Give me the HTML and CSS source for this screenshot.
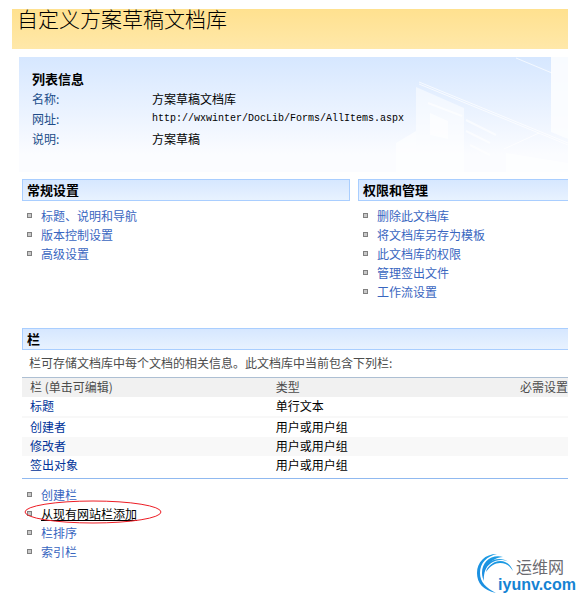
FILE: index.html
```html
<!DOCTYPE html>
<html lang="zh-CN">
<head>
  <meta charset="utf-8">
  <title>自定义方案草稿文档库</title>
  <link rel="stylesheet" href="styles.css">
</head>
<body>
  <h1 class="banner">自定义方案草稿文档库</h1>
  <div class="info">
    <svg class="info-art" viewBox="0 0 174 115" aria-hidden="true">
      <path fill="#fcfdff" fill-opacity=".9" d="M157 0h17v82l-17-7z"/>
      <path fill="#fff" fill-opacity=".5" d="M22 30l48 21v64H22z"/>
      <path fill="#fff" fill-opacity=".6" d="M36 56l18 8v18l-18-4zM2 86l20-12v41H2zM112 96l62 10v9h-62z"/>
      <path fill="none" stroke="#fff" stroke-opacity=".7" d="M25 25l149 61M25 27l149 61M122 1l36 15M110 92l35-16"/>
      <path fill="none" stroke="#fff" stroke-width="2" stroke-opacity=".6" d="M34 46l34 13M72 63l30 15M72 74l24 12M76 88l20 10"/>
    </svg>
    <h2>列表信息</h2>
    <dl>
      <dt>名称:</dt><dd>方案草稿文档库</dd>
      <dt>网址:</dt><dd class="url">http://wxwinter/DocLib/Forms/AllItems.aspx</dd>
      <dt>说明:</dt><dd>方案草稿</dd>
    </dl>
  </div>
  <div class="settings">
    <div class="group">
      <h2 class="bar">常规设置</h2>
      <ul class="links">
        <li><a href="#">标题、说明和导航</a></li>
        <li><a href="#">版本控制设置</a></li>
        <li><a href="#">高级设置</a></li>
      </ul>
    </div>
    <div class="group">
      <h2 class="bar cut">权限和管理</h2>
      <ul class="links">
        <li><a href="#">删除此文档库</a></li>
        <li><a href="#">将文档库另存为模板</a></li>
        <li><a href="#">此文档库的权限</a></li>
        <li><a href="#">管理签出文件</a></li>
        <li><a href="#">工作流设置</a></li>
      </ul>
    </div>
  </div>
  <div class="columns">
    <h2 class="bar cut">栏</h2>
    <p>栏可存储文档库中每个文档的相关信息。此文档库中当前包含下列栏:</p>
    <table>
      <thead>
        <tr><th class="name">栏 (单击可编辑)</th><th>类型</th><th class="required">必需设置</th></tr>
      </thead>
      <tbody>
        <tr class="first"><td><a href="#">标题</a></td><td>单行文本</td><td></td></tr>
        <tr><td><a href="#">创建者</a></td><td>用户或用户组</td><td></td></tr>
        <tr class="alt"><td><a href="#">修改者</a></td><td>用户或用户组</td><td></td></tr>
        <tr><td><a href="#">签出对象</a></td><td>用户或用户组</td><td></td></tr>
      </tbody>
    </table>
    <ul class="links">
      <li><a href="#">创建栏</a></li>
      <li class="marked">
        <a href="#">从现有网站栏添加</a>
        <svg class="ring" viewBox="0 0 138 24" aria-hidden="true"><ellipse cx="69" cy="12" rx="68" ry="11" fill="none" stroke="#ed1c24"/></svg>
      </li>
      <li><a href="#">栏排序</a></li>
      <li><a href="#">索引栏</a></li>
    </ul>
  </div>
  <div class="logo">
    <svg viewBox="0 0 38 42" aria-hidden="true">
      <defs>
        <linearGradient id="swirl" x1="0" y1="1" x2="1" y2="0">
          <stop offset="0" stop-color="#1b8be0"/>
          <stop offset="1" stop-color="#1c9fe4"/>
        </linearGradient>
      </defs>
      <g fill="url(#swirl)">
        <path d="M21 1C9 1 1 9 1 20c0 10 6 17 19 20C10 35 4 29 4 20 4 10 11 3 21 1z"/>
        <path d="M27 4C15 1 6 9 6 20c0 3 1 6 2 8C7 16 14 5 27 4z"/>
        <path d="M33 9C24 3 11 6 8 18 13 9 23 4 33 9z"/>
        <path d="M37 18C34 9 26 6 19 9c-4 2-8 5-9 10 4-6 9-9 14-9 6 0 10 3 13 8z"/>
      </g>
    </svg>
    <span class="logo-cn">运维网</span>
    <span class="logo-url">iyunv.com</span>
  </div>
</body>
</html>
```

FILE: styles.css
```css
body {
  position: relative;
  margin: 0;
  padding: 9px 13px 39px 12px;
  background: #fff;
  color: #000;
  font-family: "Noto Sans CJK SC", sans-serif;
  font-size: 12px;
  line-height: 19px;
}
h1, h2, p, ul, dl, dd {
  margin: 0;
  padding: 0;
}
h2 {
  font-size: 13px;
  line-height: 20px;
}
a {
  color: #3966bf;
  text-decoration: none;
}
.banner {
  height: 40px;
  padding-left: 5px;
  background: linear-gradient(#ffe18f, #ffe8a9);
  font-size: 21px;
  font-weight: 300;
  line-height: 18px;
}
.info {
  position: relative;
  margin: 8px 0 7px 7px;
  padding: 12px 13px 23px;
  background: linear-gradient(#d6e7ff, #fbfcff 85%);
}
.info-art {
  position: absolute;
  top: 0;
  right: 0;
  height: 100%;
}
.info dl {
  position: relative;
  display: grid;
  grid-template-columns: 120px 1fr;
  line-height: 20px;
}
.info dt {
  color: #204d89;
}
.info .url {
  font-family: "Liberation Mono", monospace;
  font-size: 10px;
}
.settings {
  display: grid;
  grid-template-columns: 328fr 210fr;
  gap: 8px;
  margin-left: 10px;
}
.bar {
  padding-left: 4px;
  border: 1px solid #a9ceff;
  background: linear-gradient(#d6e7ff, #e8f2ff);
}
.bar.cut {
  border-right: 0;
}
.links {
  padding: 5px 0 0 5px;
  list-style: none;
}
.links li {
  display: flex;
  align-items: center;
  gap: 9px;
}
.links li::before {
  content: "";
  width: 3px;
  height: 3px;
  border: 1px solid #808080;
  background: #c8c8c8;
}
.columns {
  margin: 27px 0 0 10px;
}
.columns p {
  padding: 3px 7px 5px;
  color: #4c4c4c;
}
table {
  width: 100%;
  border-collapse: separate;
  border-spacing: 0;
  border-top: 1px solid #adbfd3;
  border-bottom: 1px solid #90b9f0;
  padding-bottom: 3px;
  table-layout: fixed;
}
th, td {
  height: 19px;
  padding: 0;
  line-height: 17px;
  text-align: left;
  vertical-align: top;
  font-weight: normal;
}
th {
  background: #f1f1f1;
  color: #4c4c4c;
}
th:first-child, td:first-child {
  padding-left: 8px;
}
th.name {
  width: 45%;
}
th.required {
  width: 48px;
  white-space: nowrap;
}
td a {
  color: #003399;
}
.first td {
  border-bottom: 2px solid #f8f8f8;
}
.alt td {
  background: #f8f8f8;
}
.columns .links {
  padding-top: 6px;
}
.marked {
  position: relative;
}
.marked a {
  color: #000;
  text-decoration: underline;
}
.ring {
  position: absolute;
  left: -3px;
  top: -4px;
  width: 138px;
  height: 24px;
}
.logo {
  position: absolute;
  right: 5px;
  top: 553px;
  display: grid;
  grid-template-columns: 22px auto;
  line-height: 20px;
}
.logo svg {
  position: absolute;
  left: 0;
  top: 0;
  width: 38px;
  height: 42px;
}
.logo-cn {
  grid-column: 2;
  padding-left: 18px;
  color: #6a6a70;
  font-size: 16px;
  line-height: 26px;
}
.logo-url {
  grid-column: 2;
  color: #1583d3;
  font-family: "Liberation Sans", sans-serif;
  font-size: 16px;
  font-weight: bold;
  line-height: 12px;
}
```
